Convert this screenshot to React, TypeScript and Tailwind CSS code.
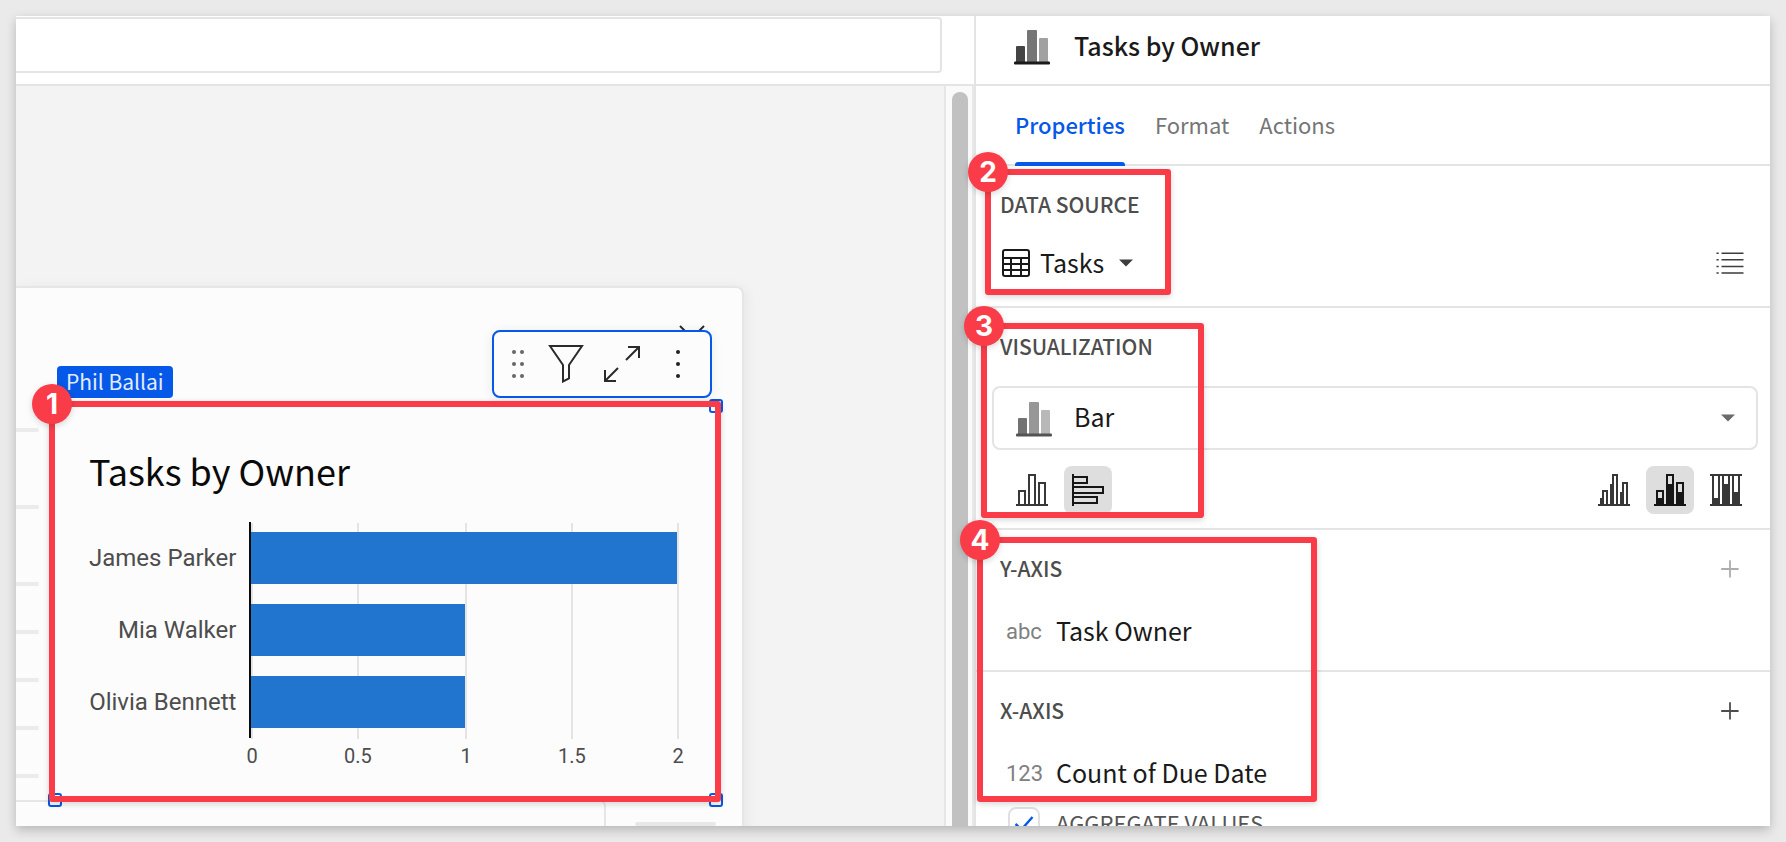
import type { ReactNode } from "react";

const uiFont = "font-['Noto_Sans_CJK_SC','Open_Sans',sans-serif]";
const chartFont = "font-[Roboto,'Liberation_Sans',sans-serif]";

function Callout({ n, className }: { n: number; className: string }) {
  return (
    <div
      className={`pointer-events-none absolute z-20 rounded-[3px] border-6 border-[#f93c48] shadow-[0_2px_6px_rgba(0,0,0,0.16)] ${className}`}
    >
      <span className="absolute -left-[23px] -top-[23px] flex size-10 items-center justify-center rounded-full bg-[#f93c48] font-[Inter,sans-serif] text-[28px] font-bold leading-none text-white shadow-[0_2px_6px_rgba(0,0,0,0.16)]">
        {n}
      </span>
    </div>
  );
}

function BarChartIcon({ className = "" }: { className?: string }) {
  return (
    <svg width="36" height="36" viewBox="0 0 36 36" aria-hidden="true" className={className}>
      <rect x="2" y="16" width="9" height="17" rx="1" fill="#444" />
      <rect x="13" y="0" width="10" height="33" rx="1" fill="#757575" />
      <rect x="25" y="8" width="9" height="25" rx="1" fill="#a1a1a1" />
      <rect x="0" y="31.5" width="36" height="3" rx="1" fill="#1a1a1a" />
    </svg>
  );
}

function Caret({ className = "" }: { className?: string }) {
  return (
    <svg width="14" height="8" viewBox="0 0 14 8" aria-hidden="true" className={className}>
      <path d="M0 .5h14L7 7.5z" fill="currentColor" />
    </svg>
  );
}

function TableIcon() {
  return (
    <svg width="28" height="28" viewBox="0 0 28 28" fill="none" stroke="#1a1a1a" strokeWidth="2" aria-hidden="true">
      <rect x="1" y="1" width="26" height="26" rx="2" />
      <path d="M1 9h26M1 15h26M1 21h26M9 9v18M19 9v18" />
    </svg>
  );
}

function ListIcon() {
  return (
    <svg width="28" height="24" viewBox="0 0 28 24" fill="none" stroke="#3d3d3d" strokeWidth="1.6" aria-hidden="true">
      <path d="M.5 2.2h2.2M5.5 2.2h22M.5 8.8h2.2M5.5 8.8h22M.5 15.5h2.2M5.5 15.5h22M.5 22h2.2M5.5 22h22" />
    </svg>
  );
}

function PlusIcon() {
  return (
    <svg width="18" height="18" viewBox="0 0 18 18" stroke="currentColor" strokeWidth="1.8" aria-hidden="true">
      <path d="M9 0.2v17.4M0.2 9h17.4" />
    </svg>
  );
}

function Glyph({ children, color = "#383838" }: { children: ReactNode; color?: string }) {
  return (
    <svg width="32" height="32" viewBox="0 0 32 32" fill="none" stroke={color} strokeWidth="2" aria-hidden="true">
      {children}
    </svg>
  );
}

const VerticalGlyph = () => (
  <Glyph>
    <path d="M0 31h32M3 31V17h6v14M13 31V1h6v30M23 31V9h6v22" />
  </Glyph>
);

const HorizontalGlyph = () => (
  <Glyph color="#161616">
    <path d="M1 0v32M1 3h14v6H1M1 13h30v6H1M1 23h24v6H1" />
  </Glyph>
);

const ClusteredGlyph = () => (
  <Glyph>
    <path d="M0 31h32M3 31v-7M5 31V17h4v14M13 31V10M15 31V1h4v30M23 31V18M25 31V9h4v22" />
  </Glyph>
);

const StackedGlyph = () => (
  <Glyph color="#161616">
    <path d="M0 31h32M3 31V17h6v14M13 31V1h6v30M23 31V9h6v22" />
    <path d="M2 24h8v7H2zM12 10h8v21h-8zM22 18h8v13h-8z" fill="#161616" stroke="none" />
  </Glyph>
);

const PercentGlyph = () => (
  <Glyph>
    <path d="M0 31h32M0 1h32M3 1v30M9 1v30M13 1v30M19 1v30M23 1v30M29 1v30" />
    <path d="M2 24h8v7H2zM12 10h8v21h-8zM22 18h8v13h-8z" fill="#383838" stroke="none" />
  </Glyph>
);

function ToggleButton({ label, active = false, children }: { label: string; active?: boolean; children: ReactNode }) {
  return (
    <button
      type="button"
      aria-label={label}
      aria-pressed={active}
      className={`flex size-12 items-center justify-center rounded-lg ${active ? "bg-[#dedede]" : "bg-transparent"}`}
    >
      {children}
    </button>
  );
}

function SectionHeading({ children }: { children: ReactNode }) {
  return <h2 className="h-12 text-[21px] font-medium leading-[46px] text-[#4d4d4d]">{children}</h2>;
}

const owners = [
  { name: "James Parker", tasks: 2 },
  { name: "Mia Walker", tasks: 1 },
  { name: "Olivia Bennett", tasks: 1 },
];
const ticks = [
  { label: "0", x: 3 },
  { label: "0.5", x: 109 },
  { label: "1", x: 217 },
  { label: "1.5", x: 323 },
  { label: "2", x: 429 },
];

function OwnerChart() {
  return (
    <div className={`flex gap-[13px] text-[24px] text-[#4d4d4d] ${chartFont}`}>
      <ul className="text-right leading-[72px]">
        {owners.map((o) => (
          <li key={o.name}>{o.name}</li>
        ))}
      </ul>
      <svg
        width="448"
        height="252"
        viewBox="0 0 448 252"
        role="img"
        aria-label="Tasks by owner"
        className="overflow-visible"
      >
        {ticks.map((t) => (
          <rect key={t.label} x={t.x - 1} y="1" width="2" height="216" fill="#e4e4e4" />
        ))}
        {owners.map((o, i) => (
          <rect key={o.name} x="2" y={10 + i * 72} width={o.tasks * 212 + 2} height="52" fill="#2175cf" />
        ))}
        <rect x="0" y="0" width="2" height="216" fill="#0a0a0a" />
        {ticks.map((t) => (
          <text key={t.label} x={t.x} y="241" textAnchor="middle" fontSize="20" fill="#4d4d4d">
            {t.label}
          </text>
        ))}
      </svg>
    </div>
  );
}

function Handle({ className }: { className: string }) {
  return <span className={`absolute size-3.5 rounded-[3px] border-2 border-[#0558e8] bg-[#fcfcfc] ${className}`} />;
}

function ElementToolbar() {
  return (
    <div className="absolute bottom-full right-[5px] mb-[7px] flex h-[68px] w-[220px] items-center rounded-lg border-2 border-[#0558e8] bg-[#fcfcfc] pl-[18px] shadow-[0_2px_12px_rgba(0,0,0,0.08)]">
      <button type="button" aria-label="Move">
        <svg width="12" height="28" viewBox="0 0 12 28" fill="#666" aria-hidden="true">
          <circle cx="2" cy="2" r="2" />
          <circle cx="10" cy="2" r="2" />
          <circle cx="2" cy="14" r="2" />
          <circle cx="10" cy="14" r="2" />
          <circle cx="2" cy="26" r="2" />
          <circle cx="10" cy="26" r="2" />
        </svg>
      </button>
      <button type="button" aria-label="Filter" className="ml-6">
        <svg width="36" height="38" viewBox="0 0 36 38" fill="none" stroke="#2b2b2b" strokeWidth="2" aria-hidden="true">
          <path d="M2 1h32L21 20v13.5l-6 3V20z" />
        </svg>
      </button>
      <button type="button" aria-label="Expand" className="ml-5">
        <svg width="36" height="36" viewBox="0 0 36 36" fill="none" stroke="#2b2b2b" strokeWidth="2" aria-hidden="true">
          <path d="M22 14 35 1M24 1h11v11M14 22 1 35M1 24v11h11" />
        </svg>
      </button>
      <button type="button" aria-label="More options" className="ml-9">
        <svg width="4" height="28" viewBox="0 0 4 28" fill="#222" aria-hidden="true">
          <circle cx="2" cy="2" r="2" />
          <circle cx="2" cy="14" r="2" />
          <circle cx="2" cy="26" r="2" />
        </svg>
      </button>
    </div>
  );
}

const rule = "h-1 rounded-r-sm bg-[#ebebeb]";

function Canvas() {
  return (
    <main className="min-w-0 flex-1 overflow-hidden border-r-2 border-[#e6e6e6] bg-[#f3f3f3] pr-[200px] pt-[200px]">
      <div className="h-[600px] rounded-tr-lg border-r-2 border-t-2 border-[#e6e6e6] bg-[#fcfcfc] shadow-[2px_2px_14px_rgba(0,0,0,0.06)]">
        <div className="flex h-[117px] justify-end pr-[37px] pt-[37px]">
          <button type="button" aria-label="Close" className="size-[26px]">
            <svg width="26" height="26" viewBox="0 0 26 26" stroke="#2b2b2b" strokeWidth="2" aria-hidden="true">
              <path d="M1 1l24 24M25 1L1 25" />
            </svg>
          </button>
        </div>
        <div className="flex gap-[15px] pr-[25px]">
          <div className="w-[23px] shrink-0 pt-[23px]">
            <div className={rule} />
            <div className={`mt-[73px] ${rule}`} />
            <div className={`mt-[73px] ${rule}`} />
            <div className={`mt-11 ${rule}`} />
            <div className={`mt-11 ${rule}`} />
            <div className={`mt-11 ${rule}`} />
            <div className={`mt-11 ${rule}`} />
          </div>
          <section className="relative min-w-0 flex-1 pb-[26px] pl-[35px] pt-[38px]">
            <h2 className="h-[79px] text-[36px] leading-[54px] text-[#0a0a0a]">Tasks by Owner</h2>
            <OwnerChart />
            <Handle className="-left-1.5 -top-1.5" />
            <Handle className="-right-1.5 -top-1.5" />
            <Handle className="-bottom-[7px] -left-1.5 z-10" />
            <Handle className="-bottom-[7px] -right-1.5" />
            <span className="absolute bottom-full left-[3px] mb-[7px] h-8 rounded-sm bg-[#0558e8] px-[9px] text-[21px] leading-[30px] text-[#e3ecfc]">
              Phil Ballai
            </span>
            <ElementToolbar />
            <Callout n={1} className="-bottom-0.5 -left-[5px] -right-1 -top-1" />
          </section>
        </div>
        <div className="flex gap-[29px] pr-[26px]">
          <div className="h-20 flex-1 rounded-tr-md border-r-2 border-t-2 border-[#e6e6e6]" />
          <div className="mt-[22px] h-1 w-[81px] rounded-sm bg-[#e8e8e8]" />
        </div>
      </div>
    </main>
  );
}

function FieldRow({ type, name }: { type: string; name: string }) {
  return (
    <div className="mt-[13px] flex h-12 items-center px-1.5">
      <span className={`w-[50px] pt-0.5 text-[22px] text-[#808080] ${chartFont}`}>{type}</span>
      <span className="text-[25px] leading-12 text-[#1a1a1a]">{name}</span>
    </div>
  );
}

function Inspector() {
  return (
    <aside className="flex min-w-0 flex-col border-l-2 border-[#e4e4e4] bg-white text-[#1a1a1a]">
      <header className="flex h-[70px] shrink-0 items-start gap-6 border-b-2 border-[#e4e4e4] px-[38px] pt-3.5">
        <BarChartIcon />
        <h1 className="text-[25px] font-medium leading-[30px]">Tasks by Owner</h1>
      </header>
      <nav className="flex h-20 shrink-0 gap-[30px] border-b-2 border-[#e4e4e4] px-[39px] text-[22px] leading-[76px] text-[#757575]">
        <a href="#properties" aria-current="page" className="relative font-medium text-[#0558e8]">
          Properties
          <span className="absolute inset-x-0 -bottom-0.5 h-1 rounded-t-[3px] bg-[#0558e8]" />
        </a>
        <a href="#format">Format</a>
        <a href="#actions">Actions</a>
      </nav>

      <section className="relative h-[142px] shrink-0 border-b-2 border-[#e4e4e4] pl-6 pr-[26px] pt-[15px]">
        <SectionHeading>DATA SOURCE</SectionHeading>
        <div className="mt-2.5 flex h-12 items-center justify-between">
          <button type="button" aria-haspopup="listbox" className="flex h-12 items-center pl-0.5 text-[25px]">
            <TableIcon />
            <span className="ml-2.5 mr-[15px] h-12 leading-[46px]">Tasks</span>
            <Caret className="text-[#3d3d3d]" />
          </button>
          <button type="button" aria-label="Show columns">
            <ListIcon />
          </button>
        </div>
        <Callout n={2} className="left-[9px] top-[3px] h-[126px] w-[186px]" />
      </section>

      <section className="relative h-[222px] shrink-0 border-b-2 border-[#e4e4e4] pt-[15px]">
        <div className="pl-6">
          <SectionHeading>VISUALIZATION</SectionHeading>
        </div>
        <div className="relative ml-4 mr-3 mt-[15px]">
          <select
            aria-label="Chart type"
            defaultValue="Bar"
            className="h-16 w-full appearance-none rounded-lg border-2 border-[#e4e4e4] bg-white pb-0.5 pl-[80px] text-[25px]"
          >
            <option>Bar</option>
            <option>Line</option>
          </select>
          <BarChartIcon className="pointer-events-none absolute left-6 top-4 opacity-75" />
          <Caret className="pointer-events-none absolute right-[23px] top-7 text-[#6b6b6b]" />
        </div>
        <div className="mt-4 flex justify-between pl-8 pr-5">
          <div className="flex gap-2">
            <ToggleButton label="Vertical">
              <VerticalGlyph />
            </ToggleButton>
            <ToggleButton label="Horizontal" active>
              <HorizontalGlyph />
            </ToggleButton>
          </div>
          <div className="flex gap-2">
            <ToggleButton label="Clustered">
              <ClusteredGlyph />
            </ToggleButton>
            <ToggleButton label="Stacked" active>
              <StackedGlyph />
            </ToggleButton>
            <ToggleButton label="Stacked 100%">
              <PercentGlyph />
            </ToggleButton>
          </div>
        </div>
        <Callout n={3} className="left-[5px] top-[15px] h-[195px] w-[223px]" />
      </section>

      <div className="relative shrink-0">
        <section className="h-[142px] border-b-2 border-[#e4e4e4] pl-6 pr-[31px] pt-[15px]">
          <div className="flex items-center justify-between">
            <SectionHeading>Y-AXIS</SectionHeading>
            <button type="button" aria-label="Add Y-axis field" className="text-[#adadad]">
              <PlusIcon />
            </button>
          </div>
          <FieldRow type="abc" name="Task Owner" />
        </section>
        <section className="pl-6 pr-[31px] pt-[15px]">
          <div className="flex items-center justify-between">
            <SectionHeading>X-AXIS</SectionHeading>
            <button type="button" aria-label="Add X-axis field" className="text-[#4d4d4d]">
              <PlusIcon />
            </button>
          </div>
          <FieldRow type="123" name="Count of Due Date" />
          <label className="mt-[11px] flex h-8 items-start gap-4 pl-2 text-[22px] leading-[30px] text-[#555]">
            <span className="relative size-8">
              <input
                type="checkbox"
                defaultChecked
                className="block size-8 appearance-none rounded-lg border-2 border-[#e0e0e0] bg-white"
              />
              <svg
                width="32"
                height="32"
                viewBox="0 0 32 32"
                fill="none"
                stroke="#0558e8"
                strokeWidth="2.4"
                aria-hidden="true"
                className="pointer-events-none absolute inset-0"
              >
                <path d="M7.5 17l6 5.5L24.5 10" />
              </svg>
            </span>
            AGGREGATE VALUES
          </label>
        </section>
        <Callout n={4} className="left-px top-[7px] h-[265px] w-[340px]" />
      </div>
    </aside>
  );
}

export default function App() {
  return (
    <div className={`h-screen bg-[#eaeaea] p-4 ${uiFont}`}>
      <div className="grid h-full grid-cols-[958fr_796fr] overflow-hidden bg-white shadow-[0_4px_10px_rgba(0,0,0,0.22)]">
        <div className="flex min-h-0 min-w-0 flex-col">
          <div className="h-[70px] shrink-0 border-b-2 border-[#e4e4e4] pr-8 pt-px">
            <input
              type="text"
              aria-label="Formula"
              className="block h-14 w-full rounded-r-[4px] border-2 border-l-0 border-[#e4e4e4] bg-white px-4 text-[22px]"
            />
          </div>
          <div className="flex min-h-0 flex-1">
            <Canvas />
            <div className="w-7 shrink-0 border-r-2 border-[#e8e8e8] bg-[#fafafa] pl-1.5 pt-1.5">
              <div className="h-full w-4 rounded-t-full bg-[#c1c1c1]" />
            </div>
          </div>
        </div>
        <Inspector />
      </div>
    </div>
  );
}
